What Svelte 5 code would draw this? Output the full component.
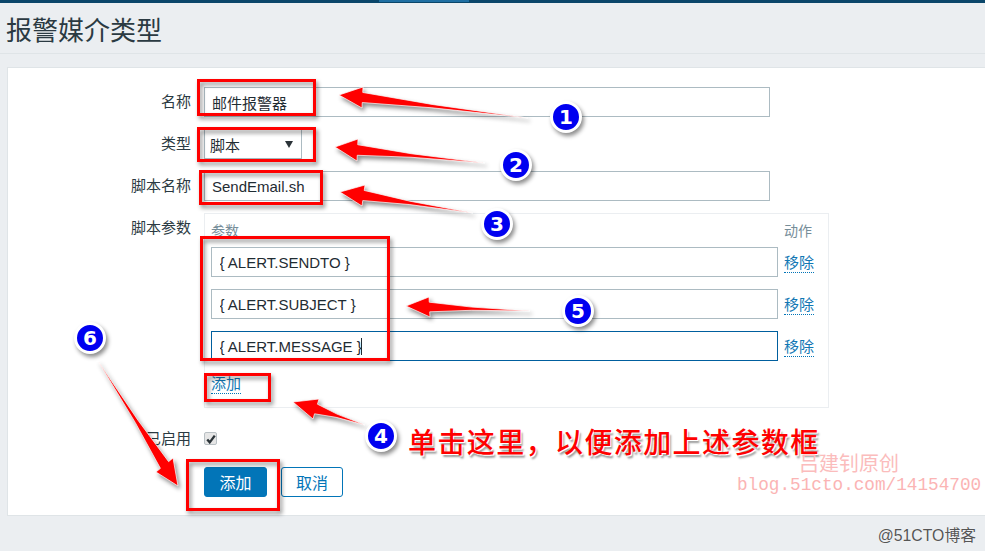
<script>
  const params = ['{ ALERT.SENDTO }', '{ ALERT.SUBJECT }', '{ ALERT.MESSAGE }'];
  const boxes = [
    [197, 79, 119, 37], [197, 127, 119, 35], [199, 170, 124, 35],
    [200, 236, 190, 125], [204, 373, 67, 29], [186, 459, 94, 52]
  ];
  // tip, barb, barb, tail: the shaft keeps its width a while, then tapers to the tail
  const arrowDefs = [
    [[339, 95], [363, 87], [362, 108], [528, 118]],
    [[335, 147], [358, 139], [357, 161], [485, 163]],
    [[340, 192], [365, 185], [362, 206], [473, 213]],
    [[406, 306], [429, 297], [430, 317], [530, 311]],
    [[293, 402], [319, 399], [313, 419], [365, 425]],
    [[178, 486], [156, 472], [173, 458], [98, 361]]
  ];
  function arrow([tip, a, b, tail]) {
    const mx = (a[0] + b[0]) / 2, my = (a[1] + b[1]) / 2;
    const lerp = (p, q, t) => [p[0] + (q[0] - p[0]) * t, p[1] + (q[1] - p[1]) * t];
    const n1 = lerp([mx, my], a, 0.48), n2 = lerp([mx, my], b, 0.48);
    const m = lerp([mx, my], tail, 0.5);
    const m1 = lerp(m, a, 0.16), m2 = lerp(m, b, 0.16);
    return [tip, a, n1, m1, tail, m2, n2, b].map((p) => p.join(',')).join(' ');
  }
  const arrows = arrowDefs.map(arrow);
  const badges = [
    [566, 117, '1'], [516, 165, '2'], [497, 224, '3'],
    [381, 436, '4'], [578, 311, '5'], [90, 338, '6']
  ];
</script>

<div class="page">
  <div class="topbar"><span class="active-tab"></span></div>
  <header class="title-row"><h1>报警媒介类型</h1></header>

  <main class="panel">
    <form class="form">
      <div class="label">名称</div>
      <input class="input wide" value="邮件报警器" />

      <div class="label">类型</div>
      <div class="select"><span>脚本</span><i class="tri"></i></div>

      <div class="label">脚本名称</div>
      <input class="input wide" value="SendEmail.sh" />

      <div class="label top">脚本参数</div>
      <div class="params">
        <div class="head">参数</div>
        <div class="head act">动作</div>
        {#each params as p, i}
          <input class="input param" class:focus={i === 2} value={p} />
          <span class="link rm">移除</span>
        {/each}
        <div class="add"><span class="link">添加</span></div>
      </div>

      <div class="label check-label">已启用</div>
      <div class="check-row">
        <span class="check">
          <svg viewBox="0 0 12 12" width="10" height="10"><path d="M1.5 6.5 4.5 10 10.5 2" fill="none" stroke="#2b3338" stroke-width="2.8" /></svg>
        </span>
      </div>

      <div class="buttons">
        <button type="button" class="btn primary">添加</button>
        <button type="button" class="btn">取消</button>
      </div>
    </form>
  </main>

  <div class="footer-mark">@51CTO博客</div>

  <span class="caret"></span>

  <svg class="overlay" width="985" height="551" viewBox="0 0 985 551">
    <g class="shadowed">
      {#each boxes as [x, y, w, h]}
        <rect x={x + 1.5} y={y + 1.5} width={w - 3} height={h - 3} fill="none" stroke="#f00" stroke-width="3" />
      {/each}
    </g>
    <g class="shadowed">
      {#each arrows as pts}
        <polygon points={pts} fill="#f00" stroke="#fff" stroke-width="0.7" />
      {/each}
    </g>
    <g class="shadowed">
      {#each badges as [x, y]}
        <circle cx={x} cy={y} r="14.5" fill="#0000f0" stroke="#fff" stroke-width="3" />
      {/each}
    </g>
    {#each badges as [x, y, n]}
      <text x={x} y={y + 7} class="digit" text-anchor="middle">{n}</text>
    {/each}
  </svg>

  <div class="note">单击这里，以便添加上述参数框</div>
  <div class="wm-name">吕建钊原创</div>
  <div class="wm-url">blog.51cto.com/14154700</div>
</div>

<style>
  :global(body) { margin: 0; background: #ebeef1; }
  .page {
    position: relative; width: 985px; height: 551px; overflow: hidden;
    background: #ebeef1; color: #1f2c33;
    font-family: "Liberation Sans", "Noto Sans CJK SC", sans-serif; font-size: 15px;
  }
  .topbar { height: 3px; background: #0a466a; position: relative; }
  .active-tab { display: block; width: 90px; height: 2px; margin-left: 379px; background: #1f6fa3; }
  .title-row { height: 50px; padding-left: 6px; border-bottom: 1px solid #dfe4e7; box-sizing: content-box; }
  h1 { margin: 0; font-size: 26px; font-weight: 400; line-height: 56px; color: #2b3a42; }
  .panel {
    margin: 13px 0 0 7px; height: 449px; box-sizing: border-box;
    background: #fff; border: 1px solid #dfe4e7; border-right: 0;
  }
  .form {
    display: grid; grid-template-columns: 183px 1fr; column-gap: 13px; row-gap: 12px;
    padding-top: 19px; align-items: center;
  }
  .label { text-align: right; color: #2b3a42; line-height: 20px; }
  .label.top { align-self: start; padding-top: 5px; }
  .input {
    display: block; box-sizing: border-box; height: 30px; padding: 0 7px; margin: 0;
    border: 1px solid #acbbc2; border-radius: 0; background: #fff; color: #1f2c33;
    font: inherit; outline: none; width: 100%; min-width: 0;
  }
  .input.param { padding-left: 7.5px; }
  .input.wide { width: 566px; }
  .input.focus { border-color: #005f9e; }
  .select {
    box-sizing: border-box; width: 98px; height: 30px; border: 1px solid #acbbc2;
    display: flex; align-items: center; justify-content: space-between; padding: 0 8px 0 5px;
  }
  .tri { width: 0; height: 0; border: 4px solid transparent; border-top: 7px solid #2b3338; border-bottom: 0; }
  .params {
    box-sizing: border-box; width: 625px; height: 195px; padding: 0 13px 0 6px;
    border: 1px solid #ebeef1;
    display: grid; grid-template-columns: 567px 1fr; column-gap: 6px; row-gap: 12px;
    align-content: start; align-items: center;
  }
  .head { color: #768d99; height: 21px; margin-top: 7px; line-height: 20px; font-size: 14px; margin-bottom: -7px; }
  .act { text-align: left; }
  .link { color: #1278b4; border-bottom: 1px dotted #0275b8; line-height: 18px; display: inline-block; justify-self: start; }
  .rm { margin-top: 3px; }
  .add { grid-column: 1 / -1; margin-top: 2px; }
  .check-label { margin-top: 9px; }
  .check-row { margin-top: 8px; height: 20px; display: flex; align-items: center; }
  .check {
    box-sizing: border-box; width: 13px; height: 13px; border: 1px solid #b9c0c4; border-radius: 2px;
    background: #e6e6e6; display: flex; align-items: center; justify-content: center;
  }
  .buttons { grid-column: 2; display: flex; gap: 14px; margin-top: 6px; }
  .btn {
    box-sizing: border-box; width: 62px; height: 30px; padding: 0; border: 1px solid #0275b8; border-radius: 3px;
    background: #fff; color: #0275b8; font: inherit; font-size: 16px;
  }
  .primary { width: 63px; background: #0275b8; color: #fff; }
  .footer-mark { position: absolute; right: 9px; top: 523px; font-size: 15.8px; color: #555; text-shadow: 0 0 1px #fff; }
  .caret { position: absolute; left: 361px; top: 338px; width: 1px; height: 17px; background: #1f2c33; }
  .overlay { position: absolute; left: 0; top: 0; }
  .shadowed { filter: drop-shadow(2px 3px 2px rgba(0, 0, 0, 0.45)); }
  .digit { font: 700 20px "DejaVu Sans", sans-serif; fill: #fff; }
  .note {
    position: absolute; left: 408px; top: 425px; font-size: 28px; letter-spacing: 1.4px; line-height: 38px; white-space: nowrap;
    color: #f00; font-weight: 500; font-family: "Liberation Serif", "Noto Sans CJK SC", serif;
    text-shadow: 1px 1px 0 #fff, 2px 3px 2px rgba(0, 0, 0, 0.4);
  }
  .wm-name { position: absolute; left: 799px; top: 448px; font-size: 20px; color: #fbbcbc; white-space: nowrap; }
  .wm-url { position: absolute; left: 737px; top: 475px; font: 17.7px "Liberation Mono", monospace; color: #fbb4b4; white-space: nowrap; }
</style>
